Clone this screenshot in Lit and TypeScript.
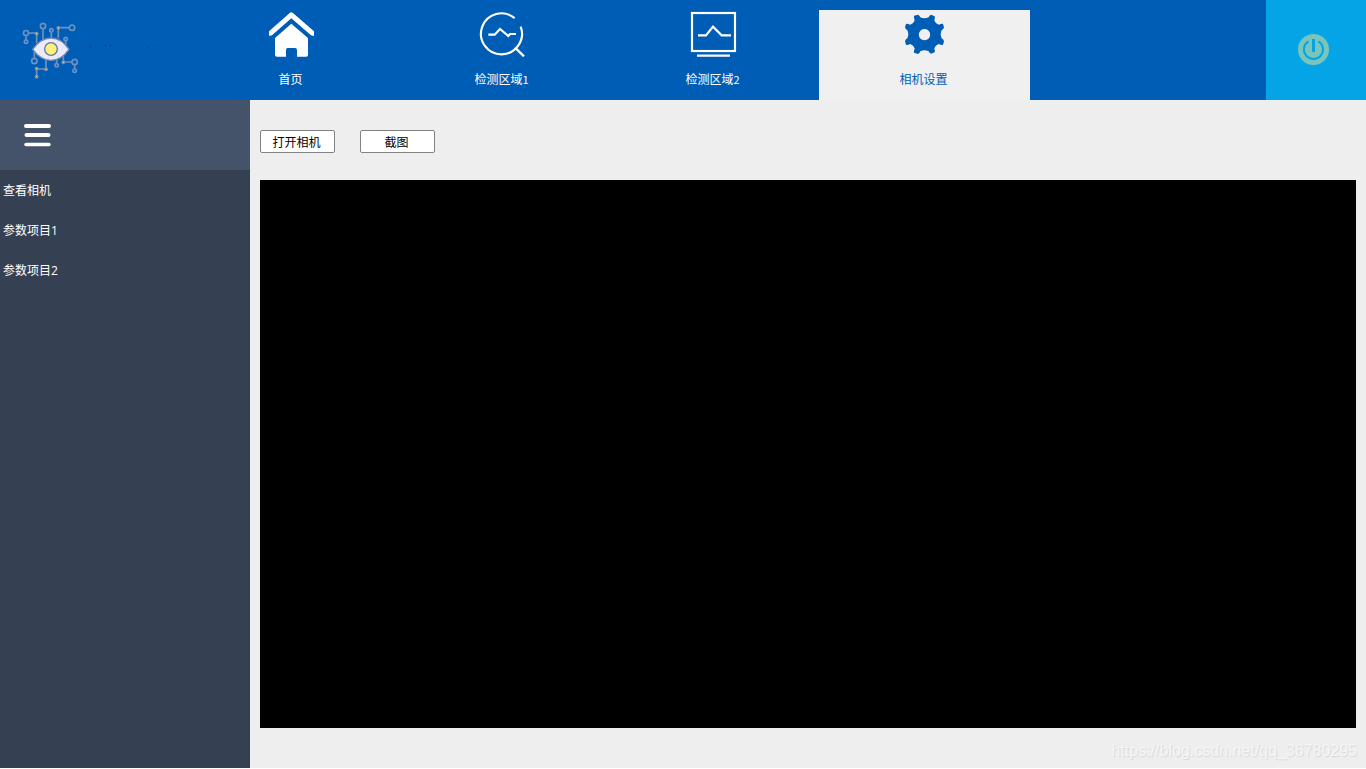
import { LitElement, html, css, svg } from "lit";
import { customElement, state } from "lit/decorators.js";
import { classMap } from "lit/directives/class-map.js";

const home = svg`
  <path d="M57 94 V108 L66 106 L124 55 L183 106 L192 108 V94 L128 38 Q124 35 120 38 Z" fill="currentColor"/>
  <path d="M75 114 L124 71 L174 114 V165 Q174 170 169 170 H141 V150 Q141 144 135 144 H113 Q108 144 108 150 V170 H81 Q75 170 75 165 Z" fill="currentColor"/>`;

const search = svg`
  <g fill="none" stroke="currentColor" stroke-width="6.5">
    <path d="M164 54.5 A61.5 61.5 0 1 0 182 80"/>
    <path d="M165 143 L192 169" stroke-width="7"/>
    <path d="M85 104 H104 L120 87 L145 108 L150 102 H168"/>
  </g>`;

const screen = svg`
  <g fill="none" stroke="currentColor" stroke-width="6.5">
    <rect x="66" y="39" width="129" height="114"/>
    <path d="M84 106 H108 L129 80 L155 106 H183"/>
    <path d="M81 167 H180"/>
  </g>`;

const gear = svg`
  <path fill="currentColor" fill-rule="evenodd" d="M312 47 L324 44 Q329 46 331 52 Q343 58 356 52 Q358 46 363 44 L374 49 Q376 53 373 60 Q376 71 387 74 Q395 70 399 72 L402 82 Q401 88 395 91 Q389 103 395 115 Q401 118 402 124 L399 134 Q395 136 387 132 Q376 135 373 146 Q376 153 374 157 L363 161 Q358 160 356 154 Q343 148 331 154 Q329 160 324 162 L312 158 Q311 153 314 146 Q311 135 300 132 Q292 136 288 134 L285 124 Q286 118 292 115 Q298 103 292 91 Q286 88 285 82 L288 72 Q292 70 300 74 Q311 71 314 60 Q311 53 312 47 Z M343 87 a17 17 0 1 0 1 0 Z"/>`;

const tabs = [
  { label: "首页", digit: "", icon: home, box: "54 33 141 138" },
  { label: "检测区域", digit: "1", icon: search, box: "57 33 141 138" },
  { label: "检测区域", digit: "2", icon: screen, box: "60 33 141 138" },
  { label: "相机设置", digit: "", icon: gear, box: "273 33 141 138" },
];

@customElement("app-root")
export class AppRoot extends LitElement {
  @state() private active = 3;

  static styles = css`
    :host {
      display: grid;
      grid-template-rows: 100px 668px;
      width: 1366px;
      position: relative;
      font: 12px/16px "Noto Sans CJK SC", sans-serif;
    }
    svg { display: block; }
    header {
      display: grid;
      grid-template-columns: 186px repeat(4, 211px) 1fr 100px;
      background: #005db5;
    }
    .brand { padding: 10px; display: flex; }
    .tab {
      display: flex;
      flex-direction: column;
      align-items: center;
      margin-top: 10px;
      padding-top: 1px;
      color: #fff;
      cursor: pointer;
    }
    .tab.on { background: #f0f0f0; color: #005db5; }
    .label { margin-top: 14px; padding-right: 2px; }
    .small { font-size: 11px; }
    .power {
      grid-column: 7;
      background: #05a4e6;
      padding: 33px 0 0 31px;
    }
    .body {
      display: grid;
      grid-template-columns: 250px 1fr;
    }
    aside { background: #364053; color: #fff; }
    .menu {
      height: 70px;
      box-sizing: border-box;
      padding: 24px 0 0 24px;
      background: #45536a;
    }
    .item {
      height: 40px;
      line-height: 40px;
      padding-left: 3px;
    }
    .digit { font-family: "Open Sans", sans-serif; }
    main {
      background: #eee;
      padding: 30px 10px 0;
    }
    .actions { display: flex; gap: 25px; }
    button {
      box-sizing: border-box;
      width: 75px;
      height: 23px;
      padding: 0 2px 0 0;
      border: 1px solid #828282;
      border-radius: 2px;
      background: #fff;
      color: #000;
      font: inherit;
    }
    .view { margin-top: 27px; height: 548px; background: #000; }
    .mark {
      position: absolute;
      right: 9px;
      bottom: 7px;
      font: 16px/20px "Liberation Sans", sans-serif;
      color: #f6f6f6;
      text-shadow: 1px 1px 1px #d6d6d6;
    }
  `;

  private logo() {
    return html`<svg width="80" height="80" viewBox="0 0 240 240">
      <g fill="none" stroke="#6f91c2" stroke-width="5">
        <path d="M55 69 H80 V100 M48 76 V90 M99 56 V90 M124 67 V82 M145 85 V53 H178 M167 92 V104 M73 124 V146 M108 146 V177 H80 V199 M140 148 V161 M160 138 V156 H186 M194 163 V176"/>
        <circle cx="48" cy="69" r="7.5"/><circle cx="48" cy="95" r="5"/>
        <circle cx="99" cy="48" r="8"/><circle cx="124" cy="61" r="5"/>
        <circle cx="186" cy="53" r="8"/><circle cx="167" cy="87" r="5"/>
        <circle cx="73" cy="153" r="8"/><circle cx="140" cy="166" r="5"/>
        <circle cx="194" cy="156" r="8"/><circle cx="194" cy="182" r="5"/>
      </g>
      <g fill="#f2e58c" stroke="#7c8aa0" stroke-width="4">
        <circle cx="80" cy="71" r="4"/><circle cx="145" cy="54" r="4"/>
        <circle cx="160" cy="157" r="4"/><circle cx="108" cy="178" r="4"/>
        <circle cx="80" cy="176" r="4"/><circle cx="80" cy="200" r="4"/>
      </g>
      <path d="M68 118 Q92 84 123 84 Q154 84 177 118 Q154 151 123 151 Q92 151 68 118 Z" fill="#ebe9fb" stroke="#7488b2" stroke-width="4"/>
      <circle cx="123" cy="117" r="19" fill="#fff07a" stroke="#5d7ca6" stroke-width="4"/>
    </svg>
    <svg width="76" height="80" viewBox="0 0 76 80" fill="#06305f">
      <path d="M0 36h1v1h-1z M15 35h1v1h-1z M20 35h1v1h-1z"/>
      <path d="M32 42h1v1h-1z M57 37h1v1h-1z M67 35h1v1h-1z" opacity=".6"/>
    </svg>`;
  }

  render() {
    return html`
      <header>
        <div class="brand">${this.logo()}</div>
        ${tabs.map(
          (t, i) => html`<div
            class=${classMap({ tab: true, on: i === this.active })}
            @click=${() => (this.active = i)}
          >
            <svg width="47" height="46" viewBox=${t.box}>${t.icon}</svg>
            <span class="label">${t.label}${t.digit ? html`<span class="small">${t.digit}</span>` : ""}</span>
          </div>`
        )}
        <div class="power">
          <svg width="33" height="33" viewBox="0 0 33 33">
            <circle cx="16.5" cy="16.5" r="15.5" fill="#79c5bc"/>
            <path d="M11.5 8.3 A9.6 9.6 0 1 0 21.5 8.3" fill="none" stroke="#05a4e6" stroke-width="2"/>
            <path d="M16.5 6 V19" stroke="#05a4e6" stroke-width="3"/>
          </svg>
        </div>
      </header>
      <div class="body">
        <aside>
          <div class="menu">
            <svg width="28" height="23" viewBox="0 0 28 23" stroke="#fff" stroke-width="4" stroke-linecap="round">
              <path d="M2 2H25M2.5 11H24.5"/><path d="M2 20.5H25" stroke-width="3.4"/>
            </svg>
          </div>
          <div class="item">查看相机</div>
          <div class="item">参数项目<span class="digit">1</span></div>
          <div class="item">参数项目<span class="digit">2</span></div>
        </aside>
        <main>
          <div class="actions">
            <button>打开相机</button>
            <button>截图</button>
          </div>
          <div class="view"></div>
        </main>
      </div>
      <div class="mark">https://blog.csdn.net/qq_36780295</div>
    `;
  }
}
